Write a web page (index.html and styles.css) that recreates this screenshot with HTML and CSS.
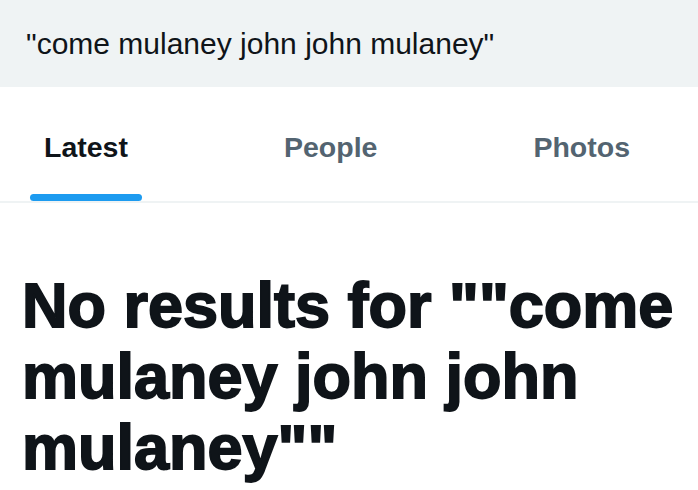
FILE: index.html
```html
<!DOCTYPE html>
<html lang="en">
<head>
  <meta charset="UTF-8">
  <meta name="viewport" content="width=device-width, initial-scale=1.0">
  <title>Search</title>
  <link rel="stylesheet" href="styles.css">
</head>
<body>
  <div class="search-bar">
    <span class="query">"come mulaney john john mulaney"</span>
  </div>

  <nav class="tabs">
    <a class="tab active" href="#">
      <span class="tab-label">Latest</span>
      <span class="tab-indicator"></span>
    </a>
    <a class="tab" href="#">
      <span class="tab-label">People</span>
      <span class="tab-indicator"></span>
    </a>
    <a class="tab" href="#">
      <span class="tab-label">Photos</span>
      <span class="tab-indicator"></span>
    </a>
  </nav>

  <main class="empty-state">
    <h1>No results for ""come mulaney john john mulaney""</h1>
  </main>
</body>
</html>
```

FILE: styles.css
```css
/* General styling */
body {
  font-family: 'Liberation Sans', Arial, sans-serif;
  background: #ffffff;
  color: #0f1419;
  margin: 0;
  padding: 0;
  overflow: hidden;
}

/* Search field on top */
.search-bar {
  height: 87px;
  display: flex;
  align-items: center;
  padding: 0 26px;
  background: #eff3f4;
}

.query {
  font-size: 30px;
  color: #0f1419;
  white-space: nowrap;
}

/* Tab strip */
.tabs {
  display: flex;
  gap: 128px;
  padding-left: 30px;
  border-bottom: 2px solid #eff3f4;
}

.tab {
  display: flex;
  flex-direction: column;
  align-items: stretch;
  padding-top: 44px;
  text-decoration: none;
  color: #536471;
  font-size: 28.5px;
  font-weight: bold;
}

.tab-label {
  padding: 0 14px;
  line-height: 33px;
  white-space: nowrap;
}

.tab-indicator {
  height: 7px;
  margin-top: 30px;
  border-radius: 4px;
  background: transparent;
}

.tab.active {
  color: #0f1419;
}

.tab.active .tab-indicator {
  background: #1d9bf0;
}

/* No results message */
.empty-state {
  padding: 67px 8px 0 22px;
}

.empty-state h1 {
  margin: 0;
  font-size: 63px;
  line-height: 71px;
  font-weight: bold;
  color: #0f1419;
  -webkit-text-stroke: 1.8px #0f1419;
}
```
